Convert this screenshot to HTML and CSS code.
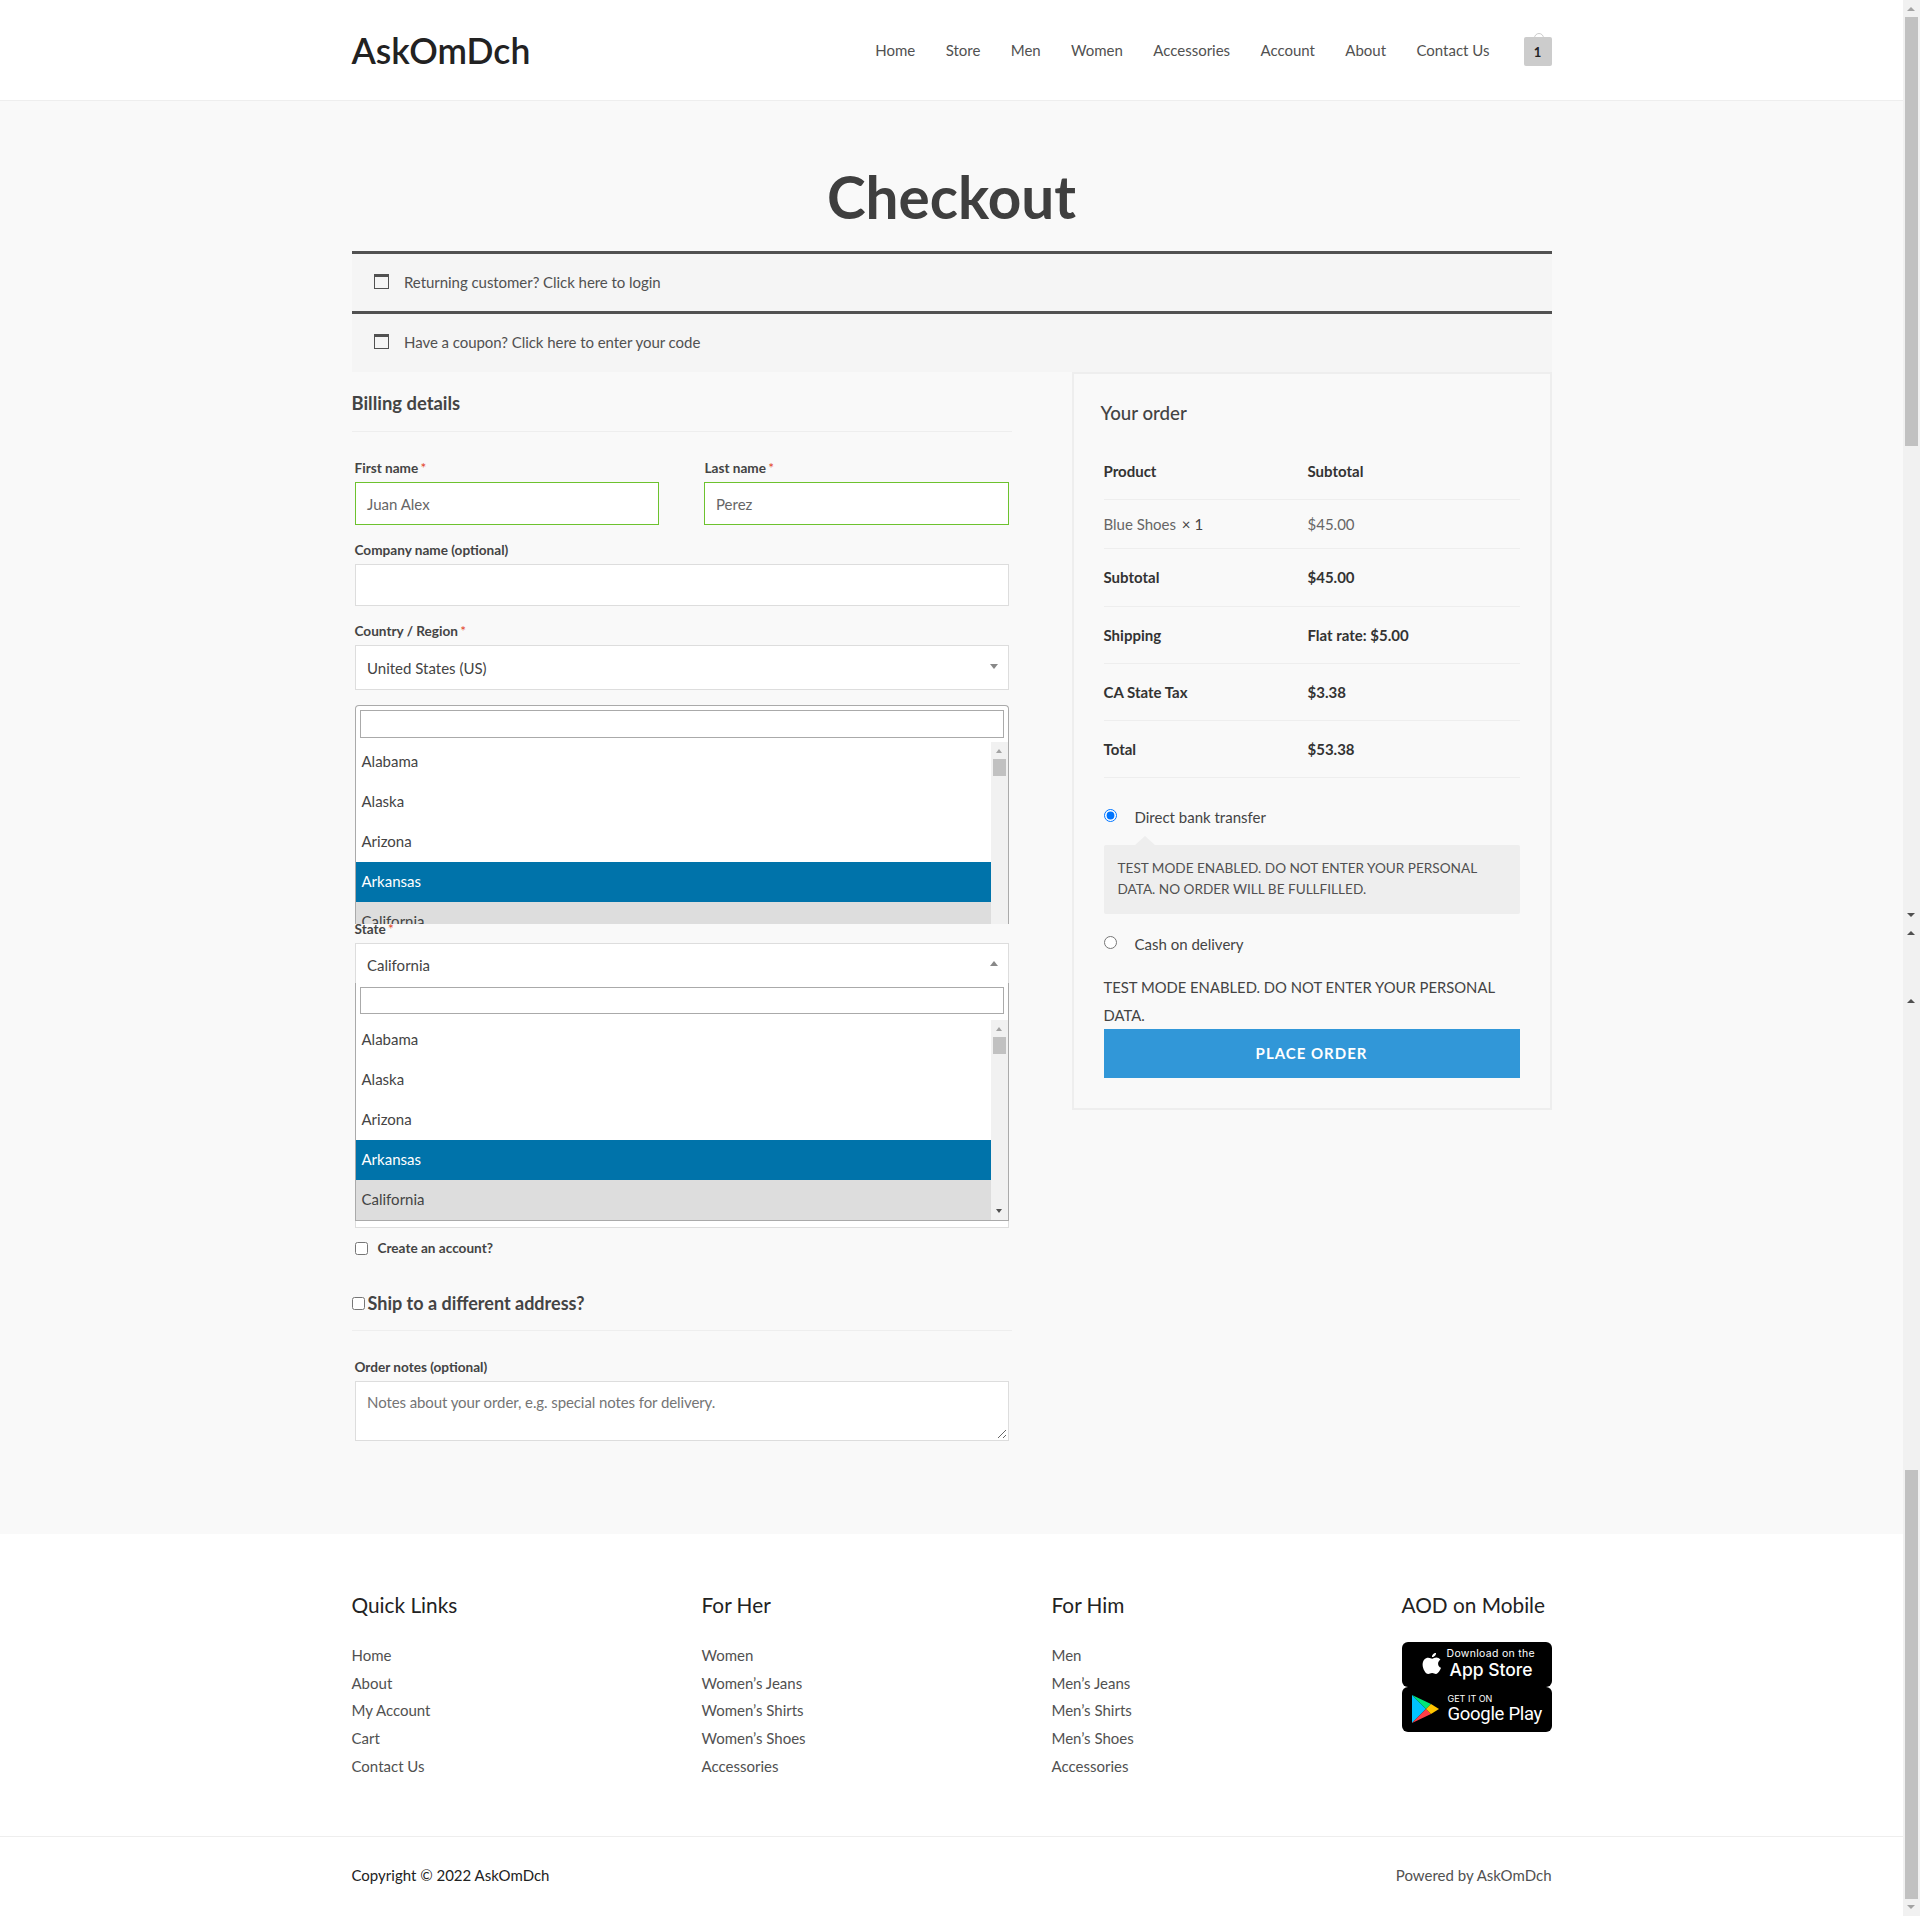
FILE: index.html
```html
<!DOCTYPE html>
<html lang="en">

<head>
    <meta charset="UTF-8">
    <title>Checkout - AskOmDch</title>
    <link rel="stylesheet" href="styles.css">
</head>

<body>

    <div class="page">
        <header class="site-header">
            <div class="container header-inner">
                <a class="logo">AskOmDch</a>
                <nav class="main-nav">
                    <a>Home</a>
                    <a>Store</a>
                    <a>Men</a>
                    <a>Women</a>
                    <a>Accessories</a>
                    <a>Account</a>
                    <a>About</a>
                    <a>Contact Us</a>
                </nav>
                <a class="cart-count">1</a>
            </div>
        </header>

        <main class="site-main">
            <div class="container">
                <h1 class="page-title">Checkout</h1>

                <div class="notice">
                    <svg class="notice-icon" width="15" height="15" viewBox="0 0 15 15">
                        <rect x="0.5" y="0.5" width="14" height="14" fill="none" stroke="#515151"/>
                        <rect width="15" height="3" fill="#515151"/>
                    </svg>
                    Returning customer? Click here to login
                </div>
                <div class="notice notice-last">
                    <svg class="notice-icon" width="15" height="15" viewBox="0 0 15 15">
                        <rect x="0.5" y="0.5" width="14" height="14" fill="none" stroke="#515151"/>
                        <rect width="15" height="3" fill="#515151"/>
                    </svg>
                    Have a coupon? Click here to enter your code
                </div>

                <div class="checkout">
                    <section class="billing">
                        <h3 class="section-title">Billing details</h3>

                        <div class="form-row">
                            <div class="field">
                                <label>First name <b class="req">*</b></label>
                                <div class="input valid">Juan Alex</div>
                            </div>
                            <div class="field">
                                <label>Last name <b class="req">*</b></label>
                                <div class="input valid">Perez</div>
                            </div>
                        </div>

                        <div class="field company">
                            <label>Company name (optional)</label>
                            <div class="input"></div>
                        </div>

                        <div class="field country">
                            <label>Country / Region <b class="req">*</b></label>
                            <div class="select">United States (US)<span class="arrow-down"></span></div>
                        </div>

                        <div class="field state">
                            <label>State <b class="req">*</b></label>
                            <div class="select">California<span class="arrow-up"></span></div>
                            <div class="under-box"></div>

                            <!-- dropdown left open from the country select, cut off by the state field -->
                            <div class="dropdown dropdown-country">
                                <div class="search-box"></div>
                                <div class="list-wrap">
                                    <ul class="options">
                                        <li>Alabama</li>
                                        <li>Alaska</li>
                                        <li>Arizona</li>
                                        <li class="current">Arkansas</li>
                                        <li class="selected">California</li>
                                    </ul>
                                    <div class="list-scroll">
                                        <span class="mini-up"></span>
                                        <span class="mini-thumb"></span>
                                    </div>
                                </div>
                            </div>

                            <div class="dropdown dropdown-state">
                                <div class="search-box"></div>
                                <div class="list-wrap">
                                    <ul class="options">
                                        <li>Alabama</li>
                                        <li>Alaska</li>
                                        <li>Arizona</li>
                                        <li class="current">Arkansas</li>
                                        <li class="selected">California</li>
                                    </ul>
                                    <div class="list-scroll">
                                        <span class="mini-up"></span>
                                        <span class="mini-thumb"></span>
                                        <span class="mini-down"></span>
                                    </div>
                                </div>
                            </div>
                        </div>

                        <label class="create-account">
                            <input type="checkbox"> Create an account?
                        </label>

                        <h3 class="section-title ship-title">
                            <input type="checkbox">Ship to a different address?
                        </h3>

                        <div class="field notes">
                            <label>Order notes (optional)</label>
                            <div class="textarea">
                                Notes about your order, e.g. special notes for delivery.
                                <svg class="resizer" width="10" height="10" viewBox="0 0 10 10">
                                    <path d="M1 9L9 1M6 9L9 6" stroke="#666" fill="none"/>
                                </svg>
                            </div>
                        </div>
                    </section>

                    <aside class="order">
                        <h3 class="order-title">Your order</h3>
                        <table class="order-table">
                            <tr class="row-head"><th>Product</th><th>Subtotal</th></tr>
                            <tr class="row-item"><td>Blue Shoes <span class="qty">× 1</span></td><td>$45.00</td></tr>
                            <tr class="row-sub"><th>Subtotal</th><th>$45.00</th></tr>
                            <tr><th>Shipping</th><th>Flat rate: $5.00</th></tr>
                            <tr><th>CA State Tax</th><th>$3.38</th></tr>
                            <tr><th>Total</th><th>$53.38</th></tr>
                        </table>

                        <label class="pay-option pay-first">
                            <input type="radio" name="pay" checked>
                            Direct bank transfer
                        </label>
                        <div class="pay-box">TEST MODE ENABLED. DO NOT ENTER YOUR PERSONAL DATA. NO ORDER WILL BE FULLFILLED.</div>
                        <label class="pay-option pay-second">
                            <input type="radio" name="pay">
                            Cash on delivery
                        </label>
                        <p class="test-note">TEST MODE ENABLED. DO NOT ENTER YOUR PERSONAL DATA.</p>
                        <button class="place-order">PLACE ORDER</button>
                    </aside>
                </div>
            </div>
        </main>

        <footer class="site-footer">
            <div class="container footer-cols">
                <div class="footer-col">
                    <h4>Quick Links</h4>
                    <a>Home</a>
                    <a>About</a>
                    <a>My Account</a>
                    <a>Cart</a>
                    <a>Contact Us</a>
                </div>
                <div class="footer-col">
                    <h4>For Her</h4>
                    <a>Women</a>
                    <a>Women’s Jeans</a>
                    <a>Women’s Shirts</a>
                    <a>Women’s Shoes</a>
                    <a>Accessories</a>
                </div>
                <div class="footer-col">
                    <h4>For Him</h4>
                    <a>Men</a>
                    <a>Men’s Jeans</a>
                    <a>Men’s Shirts</a>
                    <a>Men’s Shoes</a>
                    <a>Accessories</a>
                </div>
                <div class="footer-col footer-mobile">
                    <h4>AOD on Mobile</h4>
                    <div class="badge">
                        <svg class="badge-apple" width="20" height="24" viewBox="0 0 20 24">
                            <path fill="#fff" d="M14 1c.2 2-1.9 4.3-4 4.1C9.700 3 11.900.9 14 1zM10.200 6.700c1 0 2.300-1.200 4.200-1.200 1.400 0 3 .7 4 2.200-3.400 2-2.900 6.700.6 8.100-.8 2.300-3 6.200-5 6.200-1.600 0-2-1-3.900-1-1.800 0-2.400 1-3.900 1C3.600 22 .6 16.600.6 12.700.6 8.300 3.400 5.700 6.200 5.700c1.700 0 3 1 4 1z"/>
                        </svg>
                        <div class="badge-text">
                            <span class="badge-small">Download on the</span>
                            <span class="badge-big">App Store</span>
                        </div>
                    </div>
                    <div class="badge">
                        <svg class="badge-play" width="27" height="30" viewBox="0 0 27 30">
                            <path fill="#00c3ff" d="M0 1v28l14-14z"/>
                            <path fill="#00e676" d="M0 1l14 14 5-5z"/>
                            <path fill="#ff3d47" d="M0 29l14-14 5 5z"/>
                            <path fill="#ffc400" d="M19 10l8 5-8 5-5-5z"/>
                        </svg>
                        <div class="badge-text">
                            <span class="badge-get">GET IT ON</span>
                            <span class="badge-google">Google Play</span>
                        </div>
                    </div>
                </div>
            </div>
            <div class="footer-bottom">
                <div class="container bottom-inner">
                    <span class="copyright">Copyright © 2022 AskOmDch</span>
                    <span>Powered by AskOmDch</span>
                </div>
            </div>
        </footer>
    </div>

    <!-- two stacked window scrollbars -->
    <div class="scrollbars">
        <span class="thumb thumb-top"></span>
        <span class="thumb thumb-bottom"></span>
        <span class="tri-up tri-first"></span>
        <span class="tri-down tri-mid"></span>
        <span class="tri-up tri-mid-up"></span>
        <span class="tri-up tri-extra"></span>
        <span class="tri-down tri-last"></span>
    </div>

</body>

</html>
```

FILE: styles.css
```css
* {
    box-sizing: border-box;
}

body {
    margin: 0;
    background-color: #fff;
    font-family: 'Lato', sans-serif;
    font-size: 15px;
    color: #444;
}

.page {
    width: 1903px;
    height: 1916px;
    overflow: hidden;
}

.container {
    width: 1200px;
    margin: 0 auto;
}

/* Header */
.site-header {
    height: 101px;
    border-bottom: 1px solid #eee;
}

.header-inner {
    display: flex;
    align-items: center;
    height: 100px;
}

.logo {
    font-size: 35.5px;
    font-weight: 600;
    color: #222;
}

.main-nav {
    display: flex;
    gap: 30.35px;
    margin-left: auto;
    font-size: 15px;
    color: #515151;
}

.cart-count {
    position: relative;
    width: 28px;
    height: 29px;
    margin-left: 34px;
    margin-top: 2px;
    border-radius: 2px;
    background-color: #ccc;
    color: #222;
    font-size: 13px;
    font-weight: 700;
    line-height: 30px;
    text-align: center;
}

.cart-count::before {
    content: "";
    position: absolute;
    left: 10px;
    top: -4px;
    width: 8px;
    height: 8px;
    border: 1px solid #ccc;
    border-radius: 50%;
}

/* Main */
.site-main {
    height: 1433px;
    background-color: #f9f9f9;
}

.page-title {
    margin: 0;
    padding-top: 65px;
    height: 150px;
    font-size: 58.5px;
    font-weight: 700;
    line-height: 60px;
    text-align: center;
    color: #3f3f3f;
}

.notice {
    display: flex;
    align-items: center;
    height: 60px;
    padding: 0 0 2px 22px;
    border-top: 3px solid #515151;
    background-color: #f5f5f5;
    color: #515151;
    font-size: 15px;
    letter-spacing: -0.05px;
}

.notice-last {
    height: 61px;
    padding-bottom: 3px;
}

.notice-icon {
    margin-right: 15.5px;
}

.checkout {
    display: flex;
    justify-content: space-between;
}

.billing {
    width: 660px;
}

.section-title {
    height: 60px;
    margin: 0;
    padding-top: 19px;
    border-bottom: 1px solid #eee;
    font-size: 18.4px;
    font-weight: 700;
    line-height: 24px;
    color: #444;
}

.form-row {
    display: flex;
    justify-content: space-between;
    padding: 0 3px;
    margin-top: 26px;
}

.form-row .field {
    width: 305px;
}

.form-row .field:first-child {
    width: 304px;
}

.form-row .field:last-child label {
    padding-left: 1px;
}

.field label {
    display: block;
    height: 20px;
    font-size: 13.6px;
    font-weight: 700;
    line-height: 20px;
    color: #444;
}

.req {
    margin-left: -1px;
    color: #e2401c;
    font-weight: 400;
}

.input {
    height: 43px;
    margin-top: 4px;
    padding-left: 11.5px;
    border: 1px solid #ddd;
    background-color: #fff;
    font-size: 15px;
    line-height: 43px;
    color: #666;
}

.input.valid {
    border-color: #6dc22e;
}

.company,
.country,
.state,
.notes {
    margin: 0 3px;
}

.company {
    margin-top: 15px;
}

.company .input {
    height: 42px;
}

.country {
    margin-top: 15px;
}

.select {
    position: relative;
    height: 45px;
    margin-top: 4px;
    padding-left: 11.5px;
    border: 1px solid #ddd;
    background-color: #fff;
    font-size: 15px;
    line-height: 44px;
    color: #444;
}

.arrow-down,
.arrow-up {
    position: absolute;
    right: 10px;
    top: 18px;
    border-left: 4px solid transparent;
    border-right: 4px solid transparent;
}

.arrow-down {
    border-top: 5px solid #888;
}

.arrow-up {
    top: 17px;
    border-bottom: 5px solid #888;
}

.state {
    position: relative;
    margin-top: 232px;
}

.state label {
    position: relative;
    z-index: 3;
    height: 14px;
    line-height: 14px;
}

.state .select {
    z-index: 4;
    height: 40px;
    margin-top: 7px;
    border-bottom: 0;
    line-height: 42px;
}

.under-box {
    height: 245px;
    border: 1px solid #ddd;
    background-color: #fff;
}

/* Select2 dropdowns */
.dropdown {
    position: absolute;
    left: 0;
    right: 0;
    padding-top: 4px;
    background-color: #fff;
    border: 1px solid #aaa;
    overflow: hidden;
}

.dropdown-country {
    z-index: 1;
    top: -217px;
    height: 219px;
    border-bottom: 0;
    border-radius: 4px 4px 0 0;
}

.dropdown-state {
    z-index: 2;
    top: 61px;
    height: 238px;
    border-top: 0;
}

.search-box {
    height: 28px;
    margin: 0 4px;
    border: 1px solid #aaa;
    background-color: #fff;
}

.list-wrap {
    position: relative;
    margin-top: 4px;
    padding-right: 17px;
}

.dropdown-state .search-box {
    height: 27px;
}

.dropdown-state .list-wrap {
    margin-top: 6px;
}

.options {
    margin: 0;
    padding: 0;
    list-style: none;
    font-size: 15px;
}

.options li {
    height: 40px;
    padding-left: 6px;
    line-height: 38.5px;
    color: #444;
}

.options .current {
    background-color: #0073aa;
    color: #fff;
}

.options .selected {
    background-color: #ddd;
}

.list-scroll {
    position: absolute;
    right: 0;
    top: 0;
    bottom: 0;
    width: 17px;
    background-color: #f1f1f1;
}

.mini-thumb {
    position: absolute;
    left: 2px;
    top: 17px;
    width: 13px;
    height: 17px;
    background-color: #c1c1c1;
}

.mini-up,
.mini-down {
    position: absolute;
    left: 5px;
    border-left: 3.5px solid transparent;
    border-right: 3.5px solid transparent;
}

.mini-up {
    top: 7px;
    border-bottom: 4px solid #a3a3a3;
}

.mini-down {
    bottom: 7px;
    border-top: 4px solid #505050;
}

.create-account {
    display: flex;
    align-items: center;
    margin: 10px 0 0 3px;
    height: 20px;
    font-size: 13.6px;
    font-weight: 700;
    color: #444;
}

.create-account input {
    width: 13px;
    height: 13px;
    margin: 0 10px 0 0;
}

.ship-title {
    display: flex;
    align-items: center;
    height: 73px;
    padding-top: 18px;
    font-size: 18px;
}

.ship-title input {
    width: 13px;
    height: 13px;
    margin: 0 3px 0 0;
}

.notes {
    margin-top: 26px;
}

.textarea {
    position: relative;
    height: 60px;
    margin-top: 4px;
    padding: 10px 11.5px;
    border: 1px solid #ddd;
    background-color: #fff;
    font-size: 15px;
    line-height: 20px;
    letter-spacing: -0.09px;
    color: #757575;
}

.resizer {
    position: absolute;
    right: 1px;
    bottom: 1px;
}

/* Order card */
.order {
    width: 480px;
    height: 738px;
    padding: 27px 30px 0;
    border: 2px solid #eee;
}

.order-title {
    margin: 0 0 0 -3px;
    font-size: 18.7px;
    font-weight: 500;
    line-height: 24px;
    color: #444;
}

.order-table {
    width: 416px;
    margin-top: 18px;
    border-collapse: collapse;
    font-size: 15px;
    table-layout: fixed;
}

.order-table th,
.order-table td {
    padding: 0;
    text-align: left;
    border-bottom: 1px solid #eee;
    height: 57px;
    color: #333;
}

.order-table th:first-child,
.order-table td:first-child {
    width: 204px;
}

.order-table .row-head th {
    height: 56px;
}

.order-table .row-item td {
    height: 49px;
    color: #666;
}

.order-table .row-sub th {
    height: 58px;
}

.order-table .row-item .qty {
    margin-left: 2px;
    color: #444;
}

.pay-option {
    display: flex;
    align-items: center;
    height: 20px;
    font-size: 15px;
    color: #444;
}

.pay-option input {
    width: 13px;
    height: 13px;
    margin: 0 18px 2px 0;
}

.pay-first {
    margin-top: 29px;
}

.pay-box {
    position: relative;
    height: 69px;
    margin-top: 18px;
    padding: 13px 14px 0;
    border-radius: 2px;
    background-color: #eee;
    font-size: 13.6px;
    line-height: 21px;
    color: #515151;
}

.pay-box::before {
    content: "";
    position: absolute;
    left: 31px;
    top: -9px;
    border-left: 10px solid transparent;
    border-right: 10px solid transparent;
    border-bottom: 9px solid #eee;
}

.pay-second {
    margin-top: 20px;
}

.test-note {
    margin: 19px 0 0;
    font-size: 14.8px;
    line-height: 28px;
    color: #444;
}

.place-order {
    display: block;
    width: 416px;
    height: 49px;
    border: none;
    background-color: #3197d8;
    color: #fff;
    font-family: inherit;
    font-size: 15px;
    font-weight: 700;
    letter-spacing: 1px;
}

/* Footer */
.footer-cols {
    display: flex;
    height: 302px;
}

.footer-col {
    width: 350px;
    padding-top: 58px;
}

.footer-col h4 {
    margin: 0 0 22.9px;
    font-size: 20.8px;
    font-weight: 400;
    line-height: 26px;
    color: #222;
}

.footer-col a {
    display: block;
    height: 27.75px;
    font-size: 15px;
    line-height: 28px;
    color: #515151;
}

.footer-mobile {
    width: 150px;
}

.footer-mobile h4 {
    margin-bottom: 24px;
}

.badge {
    display: flex;
    align-items: center;
    width: 150px;
    height: 44.5px;
    margin-bottom: 0.5px;
    padding-left: 20px;
    border-radius: 6px;
    background-color: #000;
    color: #fff;
}

.badge-apple {
    margin-right: 8px;
}

.badge-play {
    margin-left: -10px;
    margin-right: 9px;
}

.badge-text {
    display: flex;
    flex-direction: column;
    font-family: 'Inter', sans-serif;
}

.badge-small {
    margin-left: -3px;
    font-size: 10.5px;
    letter-spacing: 0.3px;
    line-height: 10px;
}

.badge-big {
    font-size: 17.5px;
    font-weight: 500;
    line-height: 21px;
}

.badge-get {
    font-size: 9px;
    line-height: 10px;
}

.badge-google {
    font-family: 'Roboto', sans-serif;
    font-size: 18.5px;
    letter-spacing: -0.3px;
    line-height: 21px;
}

.footer-bottom {
    height: 80px;
    border-top: 1px solid #eee;
}

.bottom-inner {
    display: flex;
    justify-content: space-between;
    align-items: center;
    height: 76px;
    font-size: 15px;
    color: #515151;
}

.copyright {
    color: #222;
}

/* Window scrollbars */
.scrollbars {
    position: absolute;
    top: 0;
    right: 0;
    width: 17px;
    height: 1916px;
    background-color: #f1f1f1;
}

.thumb {
    position: absolute;
    left: 2px;
    width: 13px;
    background-color: #c1c1c1;
}

.thumb-top {
    top: 17px;
    height: 429px;
}

.thumb-bottom {
    top: 1470px;
    height: 429px;
}

.tri-up,
.tri-down {
    position: absolute;
    left: 4px;
    border-left: 4px solid transparent;
    border-right: 4px solid transparent;
}

.tri-up {
    border-bottom: 4px solid #505050;
}

.tri-down {
    border-top: 4px solid #505050;
}

.tri-first {
    top: 7px;
    border-bottom-color: #a3a3a3;
}

.tri-mid {
    top: 913px;
}

.tri-mid-up {
    top: 931px;
}

.tri-extra {
    top: 999px;
}

.tri-last {
    top: 1905px;
    border-top-color: #a3a3a3;
}
```
